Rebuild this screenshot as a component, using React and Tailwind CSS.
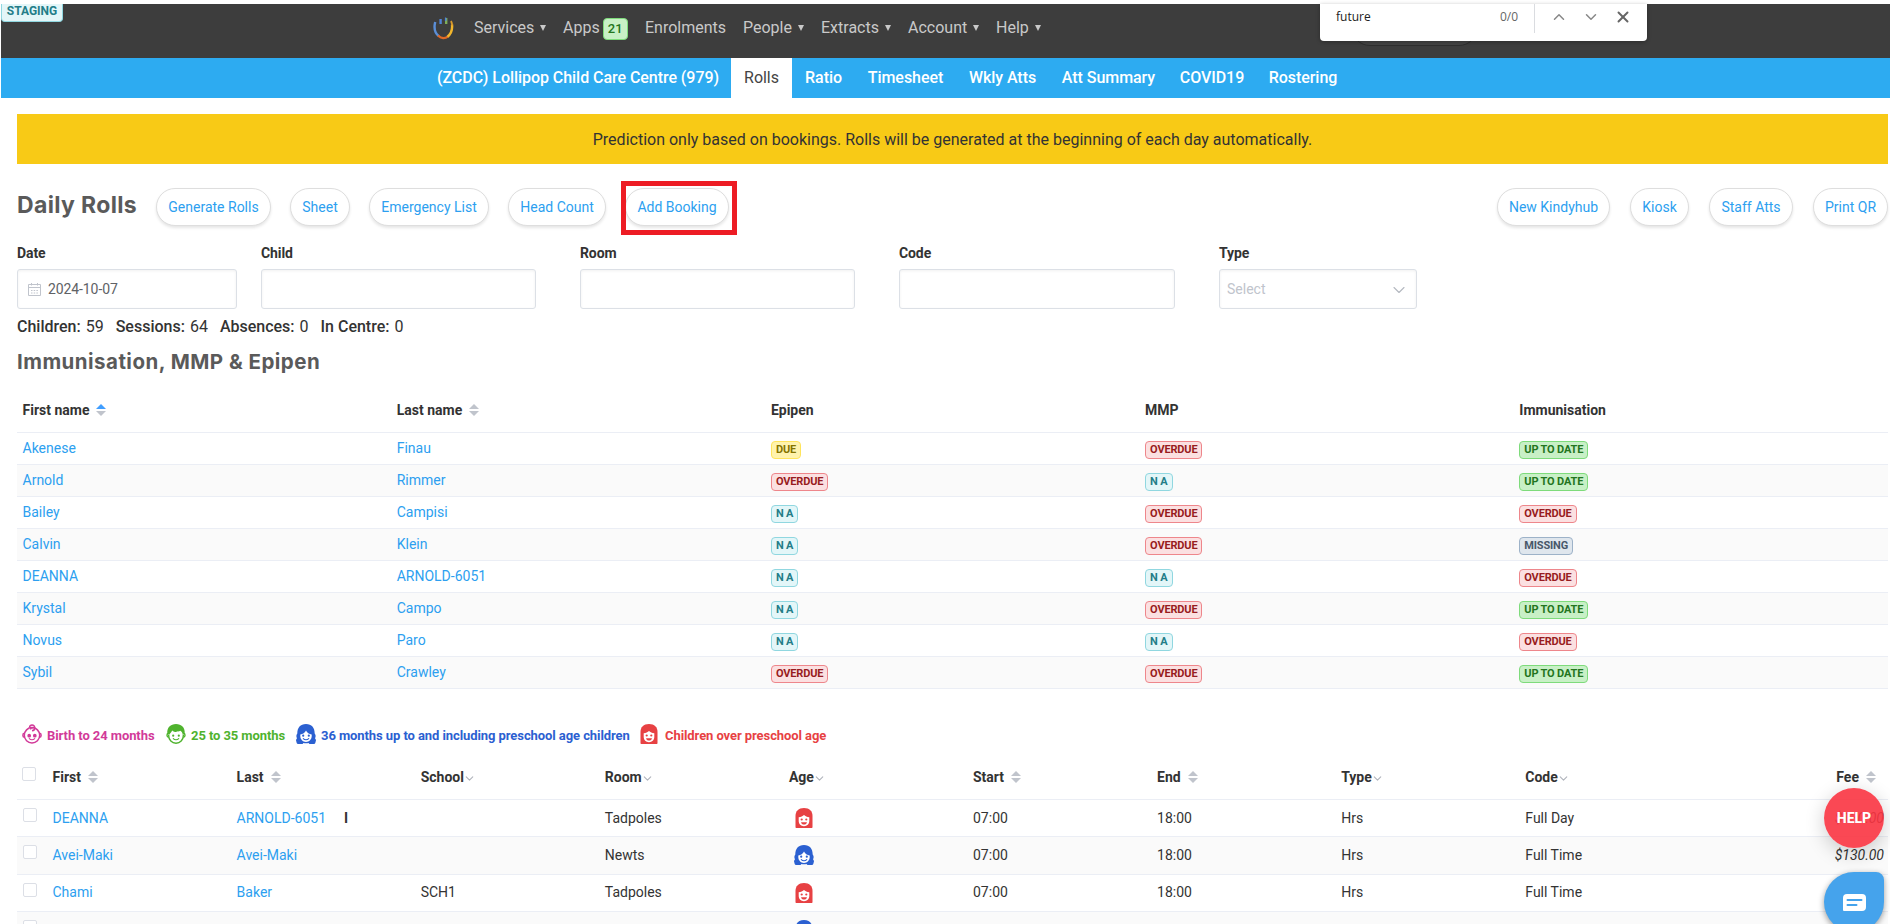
import { ChevronDown, ChevronUp, X } from 'lucide-react'

const SERVICE_NAV = [
  { label: 'Services', menu: true, width: 'w-[89px]' },
  { label: 'Apps', badge: '21', width: 'w-[82px]' },
  { label: 'Enrolments', width: 'w-[98px]' },
  { label: 'People', menu: true, width: 'w-[78px]' },
  { label: 'Extracts', menu: true, width: 'w-[87px]' },
  { label: 'Account', menu: true, width: 'w-[88px]' },
  { label: 'Help', menu: true, width: 'w-[60px]' },
]

const TABS = [
  { label: '(ZCDC) Lollipop Child Care Centre (979)', width: 'w-[306px]' },
  { label: 'Rolls', width: 'w-[61px]', active: true },
  { label: 'Ratio', width: 'w-[63px]' },
  { label: 'Timesheet', width: 'w-[101px]' },
  { label: 'Wkly Atts', width: 'w-[93px]' },
  { label: 'Att Summary', width: 'w-[119px]' },
  { label: 'COVID19', width: 'w-[88px]' },
  { label: 'Rostering', width: 'w-[94px]' },
]

const TAG_STYLES = {
  'DUE': 'bg-[#fff3ad] border-[#ffe45c] text-[#857400]',
  'OVERDUE': 'bg-[#fbe0e1] border-[#ee868b] text-[#981b20]',
  'N A': 'bg-[#e3f6f8] border-[#90d7e0] text-[#237d88]',
  'UP TO DATE': 'bg-[#c8f0c6] border-[#7edb7b] text-[#237520]',
  'MISSING': 'bg-[#dfe6ed] border-[#9db2c8] text-[#48586a]',
}

const HEALTH = [
  ['Akenese', 'Finau', 'DUE', 'OVERDUE', 'UP TO DATE'],
  ['Arnold', 'Rimmer', 'OVERDUE', 'N A', 'UP TO DATE'],
  ['Bailey', 'Campisi', 'N A', 'OVERDUE', 'OVERDUE'],
  ['Calvin', 'Klein', 'N A', 'OVERDUE', 'MISSING'],
  ['DEANNA', 'ARNOLD-6051', 'N A', 'N A', 'OVERDUE'],
  ['Krystal', 'Campo', 'N A', 'OVERDUE', 'UP TO DATE'],
  ['Novus', 'Paro', 'N A', 'N A', 'OVERDUE'],
  ['Sybil', 'Crawley', 'OVERDUE', 'OVERDUE', 'UP TO DATE'],
]

const STATS = [['Children', 59], ['Sessions', 64], ['Absences', 0], ['In Centre', 0]]

const ROLLS = [
  { first: 'DEANNA', last: 'ARNOLD-6051', flag: 'I', school: '', room: 'Tadpoles', age: 'over', code: 'Full Day', fee: '$130.00' },
  { first: 'Avei-Maki', last: 'Avei-Maki', school: '', room: 'Newts', age: 'preschool', code: 'Full Time', fee: '$130.00' },
  { first: 'Chami', last: 'Baker', school: 'SCH1', room: 'Tadpoles', age: 'over', code: 'Full Time', fee: '' },
  { first: 'Chami', last: 'Baker', school: '', room: '', age: 'preschool', code: 'Full Time', fee: '' },
]

function Logo() {
  return (
    <svg width="21" height="24" viewBox="0 0 21 24" fill="none" strokeWidth="2.4">
      <path d="M2.200 6C1 11 1.500 17 6 20.300" stroke="#5b8ed6" />
      <path d="M5 19.500C8 22.500 12 22.800 15 20.300" stroke="#e06a26" />
      <path d="M14.500 20.700C18.500 17.500 19.500 13 19 8.500" stroke="#f2b62c" />
      <path d="M19.200 9.500C19 7.500 18.600 6.200 18 5" stroke="#d99a2c" strokeWidth="1.800" />
      <path d="M7.600 3v5" stroke="#4f83d8" />
      <path d="M13.200 2v6" stroke="#7fae5a" />
      <path d="M12.600 1.500v3.500" stroke="#4f83d8" strokeWidth="1.400" />
    </svg>
  )
}

function Caret() {
  return <span className="ml-[6px] mt-px border-x-[3.5px] border-t-[6px] border-x-transparent border-t-[#c9c9c9]" />
}

function Sort({ up }) {
  return (
    <span className="ml-[7px] inline-flex flex-col gap-[2px]">
      <span className={`border-x-[5px] border-b-[5px] border-x-transparent ${up ? 'border-b-[#409eff]' : 'border-b-[#c0c4cc]'}`} />
      <span className="border-x-[5px] border-t-[5px] border-x-transparent border-t-[#c0c4cc]" />
    </span>
  )
}

function FilterArrow() {
  return <ChevronDown size={13} strokeWidth={2} className="-ml-px mt-[2px] text-[#b0b4bc]" />
}

function Tag({ label }) {
  return (
    <span className={`inline-flex h-[18px] items-center whitespace-nowrap rounded-[4px] border px-[4px] pb-px text-[11px] font-bold leading-none tracking-[-0.16px] ${TAG_STYLES[label]}`}>
      {label}
    </span>
  )
}

function Checkbox() {
  return <span className="block size-[14px] rounded-[2px] border border-[#dcdfe6] bg-white" />
}

function FaceFeatures({ fill }) {
  return (
    <>
      <circle cx="7.200" cy="11.700" r="1.100" fill={fill} />
      <circle cx="12.800" cy="11.700" r="1.100" fill={fill} />
      <path d="M7.300 14.600c1.500 1.500 3.900 1.500 5.400 0" stroke={fill} strokeWidth="1.100" fill="none" strokeLinecap="round" />
    </>
  )
}

function AgeIcon({ type }) {
  if (type === 'baby') {
    return (
      <svg width="20" height="20" viewBox="0 0 20 20" fill="none" stroke="#d23a99" strokeWidth="1.500">
        <circle cx="10" cy="11.300" r="7.700" />
        <path d="M2.300 9.200C.4 9.400.4 13 2.300 13.200M17.700 9.200c1.900.2 1.900 3.800 0 4" />
        <path d="M10 6.700c2.400-.3 2.800-1.700 2.700-3C12.500.1 7.500.1 7.600 3.500M8.500 5.500c.2-1.800 2-2.300 2.600-1.200" />
        <FaceFeatures fill="#d23a99" />
      </svg>
    )
  }
  if (type === 'toddler') {
    return (
      <svg width="20" height="20" viewBox="0 0 20 20" fill="none">
        <path d="M2.600 9.200C.4 9.400.4 13.300 2.800 13.500M17.400 9.200c2.200.2 2.200 4.100-.2 4.300" stroke="#4fb32e" strokeWidth="1.400" />
        <path d="M2.700 10.500v1.200c0 4.400 3.200 7.500 7.300 7.500s7.300-3.100 7.300-7.500v-1.200" stroke="#4fb32e" strokeWidth="1.400" />
        <path d="M1.300 9.500C.8 3.500 4.600 0 10 0s9.200 3.500 8.700 9.500l-2 1c-.3-1.800-1-2.800-2.300-3.700-1.500.9-3 .9-4.400.2.500.5.900.8 1.400 1-2 .2-3.900-.3-5.100-1.500-.8 1.500-1.800 2.500-3 4z" fill="#4fb32e" />
        <FaceFeatures fill="#4fb32e" />
      </svg>
    )
  }
  if (type === 'preschool') {
    return (
      <svg width="20" height="20" viewBox="0 0 20 20">
        <path d="M10 0C4.300 0 1.300 3.800 1.300 9.500 0 11 .2 13 1 14.200c-1 1-1.300 2.600-.5 3.500-.2 1 .4 2 1.400 2.300h4.300c.6-.2 1-.6 1.200-1.100 1.600.5 3.600.5 5.200 0 .2.500.6.900 1.200 1.100h4.300c1-.3 1.600-1.300 1.400-2.300.8-.9.500-2.500-.5-3.500.8-1.200 1-3.200-.3-4.700C18.700 3.800 15.700 0 10 0z" fill="#2b60d1" />
        <path d="M4.300 10.400C6.900 9.900 8.900 8.600 10 6.400c1.100 2.200 3.100 3.500 5.700 4v1.700c0 3.500-2.500 5.800-5.700 5.800s-5.700-2.300-5.700-5.800z" fill="#fff" />
        <FaceFeatures fill="#2b60d1" />
      </svg>
    )
  }
  return (
    <svg width="18" height="20" viewBox="0 0 18 20">
      <path d="M9 0C3.500 0 .5 3 .5 8v11c0 .6.400 1 1 1h15c.6 0 1-.4 1-1V8c0-5-3-8-8.500-8z" fill="#e74143" />
      <path d="M3.700 9.300c2.300-.2 4-.9 5.300-2.200 1.300 1.300 3 2 5.300 2.200v3.500c0 3.300-2.300 5.400-5.300 5.400s-5.300-2.100-5.300-5.400z" fill="#fff" />
      <circle cx="6.700" cy="11.500" r="1.100" fill="#e74143" />
      <circle cx="11.300" cy="11.500" r="1.100" fill="#e74143" />
      <path d="M6 14.300h6c-.3 1.500-1.500 2.300-3 2.300s-2.700-.8-3-2.300z" fill="#e74143" />
    </svg>
  )
}

function PillButton({ children, width }) {
  return (
    <button className={`h-[38px] shrink-0 rounded-full border border-[#dedede] bg-white text-center text-[14px] text-[#2d9ff0] shadow-[0_2px_3px_rgba(0,0,0,0.1)] ${width}`}>
      {children}
    </button>
  )
}

function Field({ label, width, children }) {
  return (
    <div className={width}>
      <p className="h-[26px] pt-px text-[14px] font-bold leading-[18px] tracking-[-0.1px]">{label}</p>
      <div className="flex h-[40px] items-center rounded-[3px] border border-[#dce0e6] bg-white px-[7px] text-[14px] shadow-[inset_0_1px_3px_rgba(0,0,0,0.06)]">
        {children}
      </div>
    </div>
  )
}

function CalendarIcon() {
  return (
    <svg width="13" height="13" viewBox="0 0 13 13" fill="none" stroke="#c0c4cc" className="ml-[3px] mr-[7px]">
      <path d="M.5 1.500h12v11H.5zM.5 4.500h12M3.500 0v2.500M9.500 0v2.500" />
      <path d="M3 7.500h7M3 10h7" strokeDasharray="1.500 1.200" />
    </svg>
  )
}

export default function App() {
  return (
    <div className="relative h-[924px] w-[1890px] overflow-hidden bg-white pt-[4px] font-['Roboto','Liberation_Sans',sans-serif] text-[14px] text-[#333]">
      {/* Top navigation */}
      <header className="relative ml-px flex h-[54px] bg-[#3d3d3d] pl-[432px] text-[16px] text-[#c9c9c9]">
        <span className="absolute left-0 top-0 flex h-[18px] w-[62px] justify-center rounded-b-[4px] border border-t-0 border-[#90d7e0] bg-[#e3f6f8] text-[12px] font-bold leading-[14px] text-[#237d88]">
          STAGING
        </span>
        <div className="w-[41px] pt-[12px]"><Logo /></div>
        {SERVICE_NAV.map(item => (
          <a key={item.label} className={`flex h-[47px] shrink-0 items-center ${item.width}`}>
            {item.label}
            {item.menu && <Caret />}
            {item.badge && (
              <span className="ml-[3px] mt-[3px] flex h-[22px] w-[25px] items-center justify-center rounded-[4px] border border-[#7edb7b] bg-[#c8f0c6] text-[13px] font-medium text-[#237520]">
                {item.badge}
              </span>
            )}
          </a>
        ))}

        {/* Search pill, mostly covered by the find bar */}
        <span className="absolute left-[1350px] top-[4px] h-[38px] w-[127px] rounded-full border border-[#2f2f2f] bg-[#454545]" />
        <div className="absolute left-[1319px] top-0 flex h-[37px] w-[327px] rounded-b-[4px] bg-white font-['Open_Sans',sans-serif] text-[12px] text-[#222] shadow-[0_1px_4px_rgba(0,0,0,0.3)]">
          <span className="w-[164px] pl-[16px] pt-[4px]">future</span>
          <span className="w-[50px] pl-[16px] pt-[4px] text-[#666]">0/0</span>
          <span className="h-[29px] w-px bg-[#dadce0]" />
          <ChevronUp size={18} className="ml-[15px] mt-[4px] text-[#888]" />
          <ChevronDown size={18} className="ml-[14px] mt-[4px] text-[#888]" />
          <X size={18} strokeWidth={2.600} className="ml-[14px] mt-[4px] text-[#666]" />
        </div>
      </header>

      {/* Centre tabs */}
      <nav className="ml-px flex h-[40px] bg-[#2dabf1] pl-[424px] text-[16px] font-medium tracking-[-0.05px] text-white">
        {TABS.map(tab => (
          <a key={tab.label}
            className={`flex shrink-0 items-center justify-center whitespace-nowrap ${tab.width} ${tab.active ? 'bg-white font-normal text-[#444]' : ''}`}>
            {tab.label}
          </a>
        ))}
      </nav>

      <main className="w-[1888px] pl-[17px] pt-[16px]">
        <div className="flex h-[50px] items-center justify-center bg-[#f8ca16] pt-px text-[16px]">
          Prediction only based on bookings. Rolls will be generated at the beginning of each day automatically.
        </div>

        {/* Title and actions */}
        <div className="mt-[24px] flex h-[38px] items-center">
          <h1 className="w-[139px] whitespace-nowrap pb-[4px] font-['Inter',sans-serif] text-[23px] font-bold tracking-[0.35px] text-[#5a5a5a]">Daily Rolls</h1>
          <div className="flex gap-[19px]">
            <PillButton width="w-[115px]">Generate Rolls</PillButton>
            <PillButton width="w-[60px]">Sheet</PillButton>
            <PillButton width="w-[120px]">Emergency List</PillButton>
            <PillButton width="w-[98px]">Head Count</PillButton>
            <div className="relative">
              <PillButton width="w-[104px]">Add Booking</PillButton>
              <span className="absolute -left-[4px] -top-[7px] h-[54px] w-[116px] border-[5px] border-[#ed1c24]" />
            </div>
          </div>
          <div className="ml-auto flex gap-[20px]">
            <PillButton width="w-[113px]">New Kindyhub</PillButton>
            <PillButton width="w-[59px]">Kiosk</PillButton>
            <PillButton width="w-[84px]">Staff Atts</PillButton>
            <PillButton width="w-[75px]">Print QR</PillButton>
          </div>
        </div>

        {/* Filters */}
        <div className="mt-[17px] flex">
          <Field label="Date" width="w-[220px]"><CalendarIcon /><span className="tracking-[-0.1px] text-[#606266]">2024-10-07</span></Field>
          <Field label="Child" width="ml-[24px] w-[275px]" />
          <Field label="Room" width="ml-[44px] w-[275px]" />
          <Field label="Code" width="ml-[44px] w-[276px]" />
          <Field label="Type" width="ml-[44px] w-[198px]">
            <span className="text-[#c0c4cc]">Select</span>
            <ChevronDown size={20} strokeWidth={1.300} className="ml-auto mt-[2px] text-[#b4b8c0]" />
          </Field>
        </div>
        <p className="flex h-[33px] gap-[12px] pt-[6px] text-[16px] leading-[24px]">
          {STATS.map(([label, value]) => (
            <span key={label}><b className="mr-px font-medium">{label}:</b> {value}</span>
          ))}
        </p>
        <h2 className="h-[46px] pt-[6px] font-['Inter',sans-serif] text-[20.500px] font-bold leading-[28px] tracking-[0.47px] text-[#5a5a5a]">Immunisation, MMP &amp; Epipen</h2>

        {/* Health status table */}
        <div className="grid h-[45px] grid-cols-5 border-b border-[#ebeef5] font-bold">
          {['First name', 'Last name', 'Epipen', 'MMP', 'Immunisation'].map((name, i) => (
            <div key={name} className="flex h-[44px] items-center pl-[5.5px]">
              {name}
              {i < 2 && <Sort up={i === 0} />}
            </div>
          ))}
        </div>
        {HEALTH.map((row, i) => (
          <div key={row[0]} className={`grid h-[32px] grid-cols-5 border-b border-[#ebeef5] ${i % 2 ? 'bg-[#fafafa]' : ''}`}>
            {row.map((value, col) => (
              <div key={col} className="flex items-center pl-[5.5px]">
                {col < 2 ? <a className="text-[#2d9ff0]">{value}</a> : <span className="flex pt-[3px]"><Tag label={value} /></span>}
              </div>
            ))}
          </div>
        ))}

        {/* Age legend */}
        <div className="mt-[35px] flex h-[20px] items-center whitespace-nowrap pl-[5px] text-[13px] font-bold tracking-[-0.08px]">
          <span className="flex w-[144px] items-center gap-[5px] text-[#d23a99]"><AgeIcon type="baby" /><span className="mt-[3px]">Birth to 24 months</span></span>
          <span className="flex w-[130px] items-center gap-[5px] text-[#4fb32e]"><AgeIcon type="toddler" /><span className="mt-[3px]">25 to 35 months</span></span>
          <span className="flex w-[344px] items-center gap-[5px] text-[#2b60d1]"><AgeIcon type="preschool" /><span className="mt-[3px]">36 months up to and including preschool age children</span></span>
          <span className="flex items-center gap-[7px] text-[#e74143]"><AgeIcon type="over" /><span className="mt-[3px]">Children over preschool age</span></span>
        </div>

        {/* Rolls table */}
        <div className="mt-[11px] grid h-[45px] grid-cols-[30px_repeat(10,minmax(0,1fr))] border-b border-[#ebeef5] font-bold">
          <div className="pl-[5px] pt-[12px]"><Checkbox /></div>
          {['First', 'Last', 'School', 'Room', 'Age', 'Start', 'End', 'Type', 'Code', 'Fee'].map(name => (
            <div key={name} className={`flex h-[44px] items-center pl-[5.5px] ${name === 'Fee' ? 'justify-end pr-[12px]' : ''}`}>
              {name}
              {['First', 'Last', 'Start', 'End', 'Fee'].includes(name) ? <Sort /> : <FilterArrow />}
            </div>
          ))}
        </div>
        {ROLLS.map((row, i) => (
          <div key={i} className={`grid h-[37.330px] grid-cols-[30px_repeat(10,minmax(0,1fr))] items-center border-b border-[#ebeef5] [&>div]:pl-[5.5px] ${i % 2 ? 'bg-[#fafafa]' : ''}`}>
            <div className="pb-[6px]"><Checkbox /></div>
            <div><a className="text-[#2d9ff0]">{row.first}</a></div>
            <div><a className="text-[#2d9ff0]">{row.last}</a>{row.flag && <b className="ml-[18px]">{row.flag}</b>}</div>
            <div>{row.school}</div>
            <div>{row.room}</div>
            <div className="flex w-[35px] justify-center"><AgeIcon type={row.age} /></div>
            <div>07:00</div>
            <div>18:00</div>
            <div>Hrs</div>
            <div>{row.code}</div>
            <div className="pr-[4px] text-right italic">{row.fee}</div>
          </div>
        ))}
      </main>

      {/* Floating buttons */}
      <div className="absolute left-[1824px] top-[788px] flex size-[60px] items-center justify-center rounded-full bg-[#fa3441]/90 text-[14px] font-extrabold text-white shadow-[0_5px_20px_rgba(0,0,0,0.2)]">
        HELP
      </div>
      <div className="absolute left-[1824px] top-[872px] h-[60px] w-[60px] rounded-[30px] rounded-tr-[8px] bg-[#45a3ec] pl-[19px] pt-[22px] shadow-[0_2px_6px_rgba(0,0,0,0.4)]">
        <svg width="23" height="17" viewBox="0 0 23 17">
          <path d="M4 0h15a4 4 0 0 1 4 4v9a4 4 0 0 1-4 4H1a1 1 0 0 1-1-1V4a4 4 0 0 1 4-4z" fill="#fff" />
          <path d="M4.500 6h14M4.500 11h9" stroke="#45a3ec" strokeWidth="2" strokeLinecap="round" />
        </svg>
      </div>
    </div>
  )
}
